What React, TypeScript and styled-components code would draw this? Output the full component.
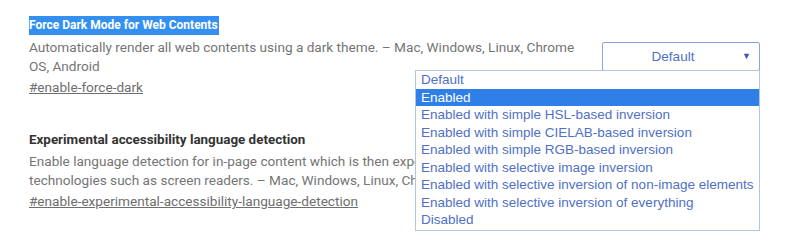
import * as React from "react";
import styled, { createGlobalStyle } from "styled-components";

const GlobalStyle = createGlobalStyle`
  html, body {
    margin: 0;
    padding: 0;
    background: #ffffff;
  }
  body {
    font-family: Roboto, "Noto Sans", sans-serif;
  }
`;

const Page = styled.div`
  width: 800px;
  height: 243px;
  overflow: hidden;
  padding: 16px 0 0 29px;
  box-sizing: border-box;
`;

const Experiment = styled.div<{ gap?: number }>`
  display: flex;
  justify-content: space-between;
  align-items: flex-start;
  padding-right: 40px;
  margin-bottom: ${(p) => p.gap || 0}px;
`;

const TextCol = styled.div`
  width: 550px;
  flex-shrink: 0;
`;

const Title = styled.h3<{ selected?: boolean }>`
  margin: 0 0 ${(p) => (p.selected ? 3 : 3)}px;
  font-size: ${(p) => (p.selected ? 12 : 13.4)}px;
  font-weight: 700;
  line-height: 19px;
  color: ${(p) => (p.selected ? "#ffffff" : "#333333")};
  span {
    display: inline-block;
    height: 19px;
    background: ${(p) => (p.selected ? "#3390f0" : "transparent")};
    padding: 0 1px 0 0;
  }
`;

const Desc = styled.p`
  margin: 0;
  font-size: 13.6px;
  line-height: 19px;
  color: #757575;
`;

const Permalink = styled.a`
  display: inline-block;
  margin-top: 2px;
  font-size: 13.6px;
  line-height: 19px;
  color: #6e6e6e;
  text-decoration: underline;
`;

const SelectWrap = styled.div`
  position: relative;
  margin-top: 26px;
`;

const SelectBox = styled.div`
  width: 158px;
  height: 29px;
  box-sizing: border-box;
  border: 1px solid #88a4dc;
  border-radius: 2px;
  display: flex;
  align-items: center;
  justify-content: center;
  padding-right: 16px;
  font-family: "Liberation Sans", Arial, sans-serif;
  font-size: 13.5px;
  color: #4f70c6;
  position: relative;
`;

const Arrow = styled.span`
  position: absolute;
  right: 8px;
  top: 8px;
  font-size: 9px;
  color: #3a5aa8;
`;

const Menu = styled.ul`
  position: absolute;
  top: 28px;
  right: 0;
  width: 345px;
  box-sizing: border-box;
  margin: 0;
  padding: 0 0 1px;
  list-style: none;
  background: #ffffff;
  border: 1px solid #b4c4e6;
  z-index: 2;
`;

const Item = styled.li<{ active?: boolean }>`
  height: 17.5px;
  line-height: 17.5px;
  padding-left: 5px;
  font-family: "Liberation Sans", Arial, sans-serif;
  font-size: 13.5px;
  white-space: nowrap;
  color: ${(p) => (p.active ? "#ffffff" : "#4f70c6")};
  background: ${(p) => (p.active ? "#2f7fe8" : "transparent")};
`;

const options = [
  "Default",
  "Enabled",
  "Enabled with simple HSL-based inversion",
  "Enabled with simple CIELAB-based inversion",
  "Enabled with simple RGB-based inversion",
  "Enabled with selective image inversion",
  "Enabled with selective inversion of non-image elements",
  "Enabled with selective inversion of everything",
  "Disabled",
];

export default function App() {
  return (
    <Page>
      <GlobalStyle />
      <Experiment gap={33}>
        <TextCol>
          <Title selected>
            <span>Force Dark Mode for Web Contents</span>
          </Title>
          <Desc>
            Automatically render all web contents using a dark theme. – Mac,
            Windows, Linux, Chrome OS, Android
          </Desc>
          <Permalink href="#">#enable-force-dark</Permalink>
        </TextCol>
        <SelectWrap>
          <SelectBox>
            Default
            <Arrow>▼</Arrow>
          </SelectBox>
          <Menu>
            {options.map((o, i) => (
              <Item key={o} active={i === 1}>
                {o}
              </Item>
            ))}
          </Menu>
        </SelectWrap>
      </Experiment>
      <Experiment>
        <TextCol>
          <Title>Experimental accessibility language detection</Title>
          <Desc>
            Enable language detection for in-page content which is then exposed
            to assistive technologies such as screen readers. – Mac, Windows,
            Linux, Chrome OS
          </Desc>
          <Permalink href="#">
            #enable-experimental-accessibility-language-detection
          </Permalink>
        </TextCol>
      </Experiment>
    </Page>
  );
}
